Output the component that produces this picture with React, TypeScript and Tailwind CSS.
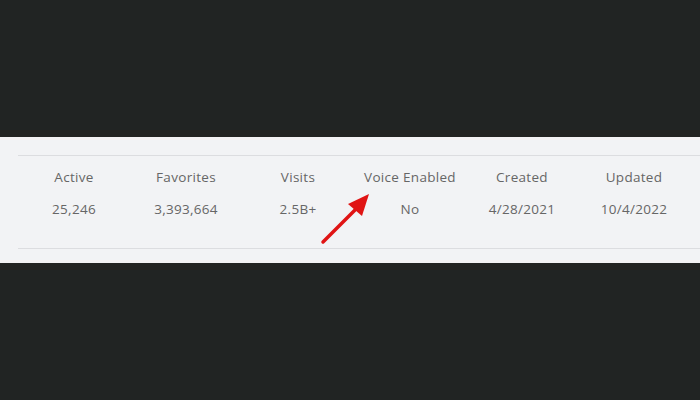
const stats = [
  { label: "Active", value: "25,246" },
  { label: "Favorites", value: "3,393,664" },
  { label: "Visits", value: "2.5B+" },
  { label: "Voice Enabled", value: "No" },
  { label: "Created", value: "4/28/2021" },
  { label: "Updated", value: "10/4/2022" },
];

export default function App() {
  return (
    <div className="w-[700px] h-[400px] bg-[#212423] flex flex-col overflow-hidden" style={{ fontFamily: '"Open Sans", "Liberation Sans", sans-serif' }}>
      <div className="h-[137px]" />
      <div className="relative h-[126px] bg-[#f2f3f5] pt-[18px] pl-[18px]">
        <div className="border-t border-[#dcdde0] h-[1px]" />
        {/* stats row */}
        <div className="grid grid-cols-6 w-[672px] pt-[11px] text-[13.5px] font-medium tracking-[0.3px] text-[#666666]">
          {stats.map((s) => (
            <div key={s.label} className="flex flex-col items-center">
              <div className="h-[20px] leading-[20px]">{s.label}</div>
              <div className="h-[20px] leading-[20px] mt-[12px]">{s.value}</div>
            </div>
          ))}
        </div>
        <div className="border-t border-[#dcdde0] h-[1px] mt-[29px]" />
        {/* red arrow */}
        <svg className="absolute left-[300px] top-[50px]" width="80" height="70" viewBox="0 0 80 70">
          <line x1="23" y1="55" x2="56" y2="22" stroke="#e01414" strokeWidth="3.5" strokeLinecap="round" />
          <polygon points="69,7 48,17 62,29" fill="#e01414" />
        </svg>
      </div>
      <div className="flex-1" />
    </div>
  );
}
